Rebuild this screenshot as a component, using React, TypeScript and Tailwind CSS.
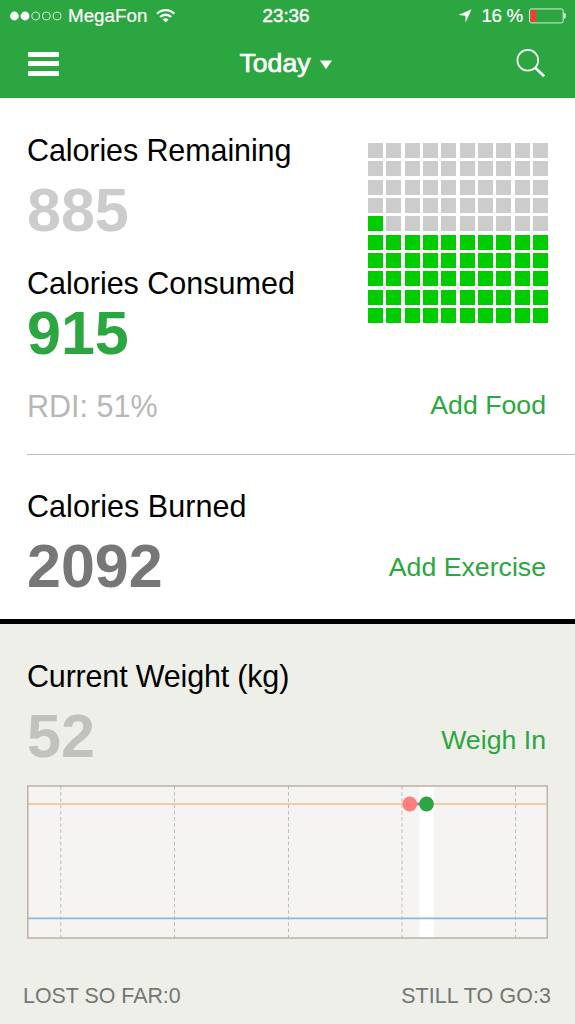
import React from "react";

const TOTAL_CELLS = 100;
const EMPTY_CELLS = 49;

function cellColor(index: number) {
  return index === 40 || index > EMPTY_CELLS ? "bg-[#00cc00]" : "bg-[#cccccc]";
}

function StatusBar() {
  return (
    <div className="flex h-8 items-center justify-between pl-[10px] pr-[9px] text-[18.8px] leading-8">
      <div className="flex w-[198px] items-center">
        <svg width="54" height="12" viewBox="0 0 54 12" fill="none" stroke="#fff">
          <circle cx="4.4" cy="6" r="4.4" fill="#fff" stroke="none" />
          <circle cx="15" cy="6" r="4.4" fill="#fff" stroke="none" />
          <circle cx="25.7" cy="6" r="4" strokeWidth="0.8" />
          <circle cx="36.4" cy="6" r="4" strokeWidth="0.8" />
          <circle cx="47.1" cy="6" r="4" strokeWidth="0.8" />
        </svg>
        <span className="ml-1 [-webkit-text-stroke:0.2px_white]">MegaFon</span>
        <svg className="ml-[9px]" width="20" height="16" viewBox="0 0 20 16" fill="none" stroke="#fff" strokeWidth="2.3">
          <path d="M1.1 5.7a12.2 12.2 0 0 1 17.2 0" />
          <path d="M4.2 9a7.8 7.8 0 0 1 11 0" />
          <path d="M9.7 14.6 6.8 11.6a4.3 4.3 0 0 1 5.8 0z" fill="#fff" stroke="none" />
        </svg>
      </div>
      <span className="[-webkit-text-stroke:0.5px_white]">23:36</span>
      <div className="flex w-[202px] items-center justify-end">
        <svg width="14" height="14" viewBox="0 0 14 14" fill="#fff">
          <path d="M13.6.3 7.6 13.6 7.4 6.7.4 6.1z" />
        </svg>
        <span className="ml-[9px] tracking-[-0.3px] [-webkit-text-stroke:0.2px_white]">16 %</span>
        <svg className="ml-[6px]" width="37" height="16" viewBox="0 0 37 16">
          <rect x="0.6" y="0.9" width="33.6" height="14" rx="1.8" fill="none" stroke="#fff" strokeOpacity="0.8" strokeWidth="1" />
          <rect x="1.6" y="1.9" width="5.6" height="12" rx="0.7" fill="#ff3b30" />
          <path d="M34.6 5.3h1q1 0 1 1v3.2q0 1-1 1h-1z" fill="#fff" />
        </svg>
      </div>
    </div>
  );
}

function NavBar() {
  return (
    <div className="flex h-[66px] items-start justify-between pl-7 pr-[29px]">
      <button className="mt-5 flex w-[90px] flex-col gap-[4.3px]" aria-label="Menu">
        <span className="h-[5px] w-[31px] rounded-[1px] bg-white" />
        <span className="h-[5px] w-[31px] rounded-[1px] bg-white" />
        <span className="h-[5px] w-[31px] rounded-[1px] bg-white" />
      </button>
      <button className="mt-[11px] flex items-center text-[26.6px] leading-10 [-webkit-text-stroke:0.7px_white]">
        Today
        <svg className="ml-[10px] mt-[4px]" width="12" height="10" viewBox="0 0 12 10" fill="#fff">
          <path d="M0 .5h12L6 9.3z" />
        </svg>
      </button>
      <button className="mt-[16px] flex w-[92px] justify-end" aria-label="Search">
        <svg width="30" height="30" viewBox="0 0 30 30" fill="none" stroke="#fff">
          <circle cx="11.8" cy="12.2" r="10.4" strokeWidth="1.7" />
          <path d="m19.2 19.8 9 8.5" strokeWidth="2.6" />
        </svg>
      </button>
    </div>
  );
}

function Label({ className = "", children }: { className?: string; children: React.ReactNode }) {
  return <div className={`h-10 whitespace-nowrap text-[30.5px] leading-10 ${className}`}>{children}</div>;
}

function Figure({ className, children }: { className: string; children: React.ReactNode }) {
  return <div className={`h-[60px] text-[61px] font-bold leading-[60px] ${className}`}>{children}</div>;
}

function Action({ children }: { children: React.ReactNode }) {
  return <button className="h-10 whitespace-nowrap text-[26.7px] leading-10 text-[#2ca640]">{children}</button>;
}

function WeightChart() {
  return (
    <svg className="ml-[27px] mt-[19px] block" width="521" height="154" viewBox="0 0 521 154" fill="none">
      <rect x="0.8" y="1" width="519.5" height="152" fill="#f5f4f2" />
      <rect x="392.5" y="1" width="14.5" height="152" fill="#fff" />
      <path d="M33.8 1v152M147.5 1v152M261.5 1v152M375 1v152M488.5 1v152" stroke="#bcbcbc" strokeWidth="1" strokeDasharray="3.6 2.6" />
      <path d="M1 19h519" stroke="#f5cba3" strokeWidth="1.9" />
      <path d="M1 133.4h519" stroke="#8db8d6" strokeWidth="1.6" />
      <path d="M383 19h17" stroke="#8c8fa8" strokeWidth="3" />
      <rect x="0.8" y="1" width="519.5" height="152" stroke="#bdb0a7" strokeWidth="1.5" />
      <circle cx="382.8" cy="19" r="7.4" fill="#ff7f7f" />
      <circle cx="399.5" cy="19" r="7.4" fill="#2ca640" />
    </svg>
  );
}

export default function App() {
  return (
    <main className="flex h-[1024px] w-[575px] flex-col overflow-hidden bg-white font-['Liberation_Sans',Arial,sans-serif] text-black">
      <header className="h-[98px] shrink-0 bg-[#2ca640] text-white">
        <StatusBar />
        <NavBar />
      </header>

      <section className="h-[356px] shrink-0 pl-[27px] pr-[27px] pt-8">
        <div className="flex h-[233px] justify-between">
          <div>
            <Label className="tracking-[-0.1px]">Calories Remaining</Label>
            <Figure className="mt-[10px] text-[#cccccc]">885</Figure>
            <Label className="mt-[23px]">Calories Consumed</Label>
            <Figure className="text-[#2ca640]">915</Figure>
          </div>
          <div className="mt-[13px] grid h-[180px] w-[180px] grid-cols-10 grid-rows-10 gap-[3.4px]">
            {Array.from({ length: TOTAL_CELLS }, (_, i) => (
              <span key={i} className={cellColor(i)} />
            ))}
          </div>
        </div>
        <div className="mt-[22px] flex items-start justify-between pr-[2px]">
          <Label className="mt-px text-[#b7b7b7]">RDI: 51%</Label>
          <Action>Add Food</Action>
        </div>
      </section>

      <section className="h-[165px] shrink-0">
        <div className="ml-[27px] h-px bg-[#bfbfbf]" />
        <div className="pl-[27px] pr-[29px] pt-[31px]">
          <Label className="tracking-[0.05px]">Calories Burned</Label>
          <div className="mt-[10px] flex items-start justify-between">
            <Figure className="text-[#777777]">2092</Figure>
            <div className="pt-[11px]">
              <Action>Add Exercise</Action>
            </div>
          </div>
        </div>
      </section>

      <section className="flex-1 border-t-[5px] border-black bg-[#eeefe9] pt-8">
        <div className="pl-[27px] pr-[29px]">
          <Label className="tracking-[-0.18px]">Current Weight (kg)</Label>
          <div className="mt-[10px] flex items-end justify-between">
            <Figure className="text-[#c0c2bb]">52</Figure>
            <div className="pb-[6px]">
              <Action>Weigh In</Action>
            </div>
          </div>
        </div>
        <WeightChart />
        <footer className="mt-[42px] flex justify-between pl-[23px] pr-6 text-[21.4px] leading-[30px] text-[#747672]">
          <span>LOST SO FAR:0</span>
          <span className="tracking-[0.12px]">STILL TO GO:3</span>
        </footer>
      </section>
    </main>
  );
}
